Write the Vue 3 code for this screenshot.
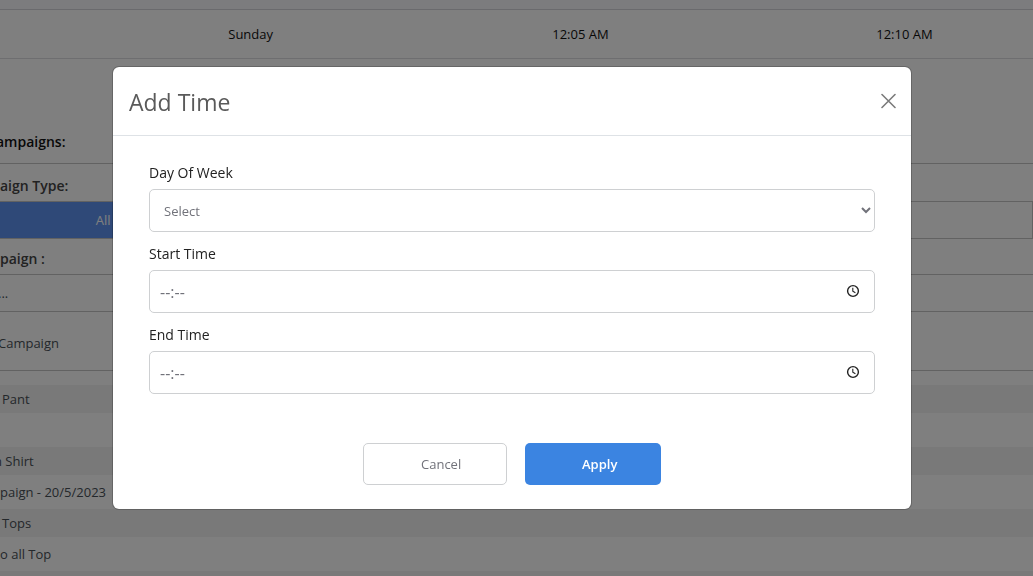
<script setup>
import { ref } from 'vue'

const day = ref('')
const times = ref([
  { id: 'start-time', label: 'Start Time', value: '' },
  { id: 'end-time', label: 'End Time', value: '' },
])
const campaigns = ['Pant', '', 'n Shirt', 'paign - 20/5/2023', 'Tops', 'o all Top', '']
</script>

<template>
  <div class="screen">
    <main class="page">
      <table class="schedule">
        <thead>
          <tr class="schedule-head"><th></th><th></th><th></th><th></th></tr>
        </thead>
        <tbody>
          <tr>
            <td></td>
            <td>Sunday</td>
            <td>12:05 AM</td>
            <td>12:10 AM</td>
          </tr>
        </tbody>
      </table>
      <h2 class="section-title">ampaigns:</h2>
      <h3 class="group-title">aign Type:</h3>
      <div class="tabs">
        <button class="tab active" type="button">All</button>
        <button class="tab" type="button" aria-label="Other"></button>
      </div>
      <h3 class="group-title search-title">paign :</h3>
      <div class="search">...</div>
      <div class="list-head">Campaign</div>
      <ul class="list">
        <li
          v-for="(name, i) in campaigns"
          :key="i"
          :class="{ indent: name === 'Pant' || name === 'Tops', clipped: name === 'n Shirt' }"
        >{{ name }}</li>
      </ul>
    </main>

    <div class="overlay">
      <section class="modal" role="dialog" aria-labelledby="modal-title">
        <header class="modal-header">
          <h1 id="modal-title">Add Time</h1>
          <button class="close" type="button" aria-label="Close">
            <svg width="16" height="16" viewBox="0 0 16 16"><path d="M2 1.5l13 13M15 1.5l-13 13" stroke="#7b7b7b" stroke-width="1.6" stroke-linecap="round" /></svg>
          </button>
        </header>
        <form class="modal-body" @submit.prevent>
          <div class="field">
            <label for="day">Day Of Week</label>
            <select id="day" v-model="day" class="control">
              <option value="">Select</option>
              <option value="sunday">Sunday</option>
            </select>
          </div>
          <div v-for="time in times" :key="time.id" class="field">
            <label :for="time.id">{{ time.label }}</label>
            <div class="control time-box">
              <input :id="time.id" v-model="time.value" type="text" placeholder="--:--" />
              <button class="clock" type="button" aria-label="Pick a time">
                <svg width="14" height="14" viewBox="0 0 14 14" fill="none" stroke="#222">
                  <circle cx="7" cy="7" r="5.4" stroke-width="1.4" />
                  <path d="M6.8 3.8v3.4l2.6 1.6" stroke-width="1.1" />
                </svg>
              </button>
            </div>
          </div>
          <div class="actions">
            <button class="btn cancel" type="button">Cancel</button>
            <button class="btn apply" type="submit">Apply</button>
          </div>
        </form>
      </section>
    </div>
  </div>
</template>

<style>
body {
  margin: 0;
  overflow: hidden;
}
</style>

<style scoped>
* {
  box-sizing: border-box;
}
.screen {
  height: 100vh;
  overflow: hidden;
  font-family: "Segoe UI", "Open Sans", "Noto Sans", sans-serif;
  font-size: 13px;
  line-height: 20px;
  color: #212529;
}
button,
input,
select {
  font: inherit;
}
h1,
h2,
h3,
ul {
  margin: 0;
  padding: 0;
}
.page {
  background: #fff;
}
.schedule {
  width: 100%;
  table-layout: fixed;
  border-collapse: collapse;
}
.schedule th {
  height: 9px;
  padding: 0;
  background: #f8f8fc;
  border-bottom: 1px solid #d4d5da;
}
.schedule th:first-child {
  width: 22%;
}
.schedule th:nth-child(2),
.schedule th:nth-child(3) {
  width: 324px;
}
.schedule td {
  height: 49px;
  padding: 1px 0 0 1px;
  border-bottom: 1px solid #dcdde1;
  color: #111;
  white-space: nowrap;
}
.section-title {
  height: 105px;
  padding-top: 73px;
  border-bottom: 1px solid #c4c4c4;
  font-size: 14px;
  font-weight: 600;
  text-indent: -4px;
  color: #111;
}
.group-title {
  height: 37px;
  padding-top: 12px;
  font-size: 14px;
  font-weight: 600;
  color: #444;
}
.tabs {
  display: grid;
  grid-template-columns: 1fr 4fr;
  height: 38px;
  border: 1px solid #c4c4c4;
  border-left: 0;
}
.tab {
  padding: 0;
  border: 0;
  background: #fff;
}
.tab.active {
  background: #5f93f0;
  color: #fff;
}
.search-title {
  height: 36px;
  padding-top: 10px;
  border-bottom: 1px solid #c4c4c4;
}
.search {
  height: 37px;
  padding-top: 8px;
  border-bottom: 1px solid #c4c4c4;
  color: #495057;
  text-indent: -2px;
}
.list-head {
  height: 59px;
  padding-top: 21px;
  border-bottom: 1px solid #c4c4c4;
  color: #495057;
  text-indent: -2px;
}
.list {
  padding-top: 14px;
  list-style: none;
}
.list li {
  height: 34px;
  padding-top: 7px;
  color: #495057;
}
.list li:nth-child(odd) {
  height: 28px;
  padding-top: 4px;
  background: #f2f2f2;
}
.list li.indent {
  padding-left: 2px;
}
.list li.clipped {
  text-indent: -6px;
}
.overlay {
  position: fixed;
  inset: 0;
  display: flex;
  justify-content: center;
  align-items: flex-start;
  padding: 66px 9px 0 0;
  background: rgba(0, 0, 0, 0.5);
}
.modal {
  width: 100%;
  max-width: 800px;
  border: 1px solid rgba(0, 0, 0, 0.2);
  border-radius: 7px;
  background: #fff;
  background-clip: padding-box;
}
.modal-header {
  display: flex;
  justify-content: space-between;
  align-items: center;
  padding: 0 15px 0 16px;
  height: 69px;
  border-bottom: 1px solid #dee2e6;
}
.modal-header h1 {
  padding-top: 2px;
  font-size: 23px;
  line-height: 36px;
  font-weight: 400;
  color: #5a5a5a;
}
.close,
.clock {
  display: flex;
  padding: 0;
  border: 0;
  background: none;
}
.modal-body {
  padding: 24px 36px;
}
.field {
  margin-bottom: 8px;
}
.field label {
  display: block;
  height: 29px;
  line-height: 26px;
  font-size: 14px;
  color: #222;
}
.field + .field label {
  height: 30px;
  line-height: 28px;
}
.control {
  width: 100%;
  height: 43px;
  padding: 0 10px;
  border: 1px solid #ced0d2;
  border-radius: 5px;
  background: #fff;
  color: #71727a;
}
.time-box {
  display: flex;
  align-items: center;
  padding-right: 14px;
}
.time-box input {
  flex: 1;
  min-width: 0;
  padding: 0;
  border: 0;
  outline: 0;
  background: none;
  font-size: 16px;
}
.time-box input::placeholder {
  color: #71727a;
}
.clock {
  padding-bottom: 2px;
}
.actions {
  display: flex;
  justify-content: center;
  gap: 18px;
  padding-top: 41px;
}
.btn {
  width: 144px;
  height: 42px;
  padding: 0 0 0 57px;
  border: 0;
  border-radius: 5px;
  background: #fff;
  color: #71727a;
  text-align: left;
}
.cancel {
  border: 1px solid #ced0d2;
}
.apply {
  width: 136px;
  background: #3b84e1;
  color: #fff;
  font-weight: 600;
}
</style>
